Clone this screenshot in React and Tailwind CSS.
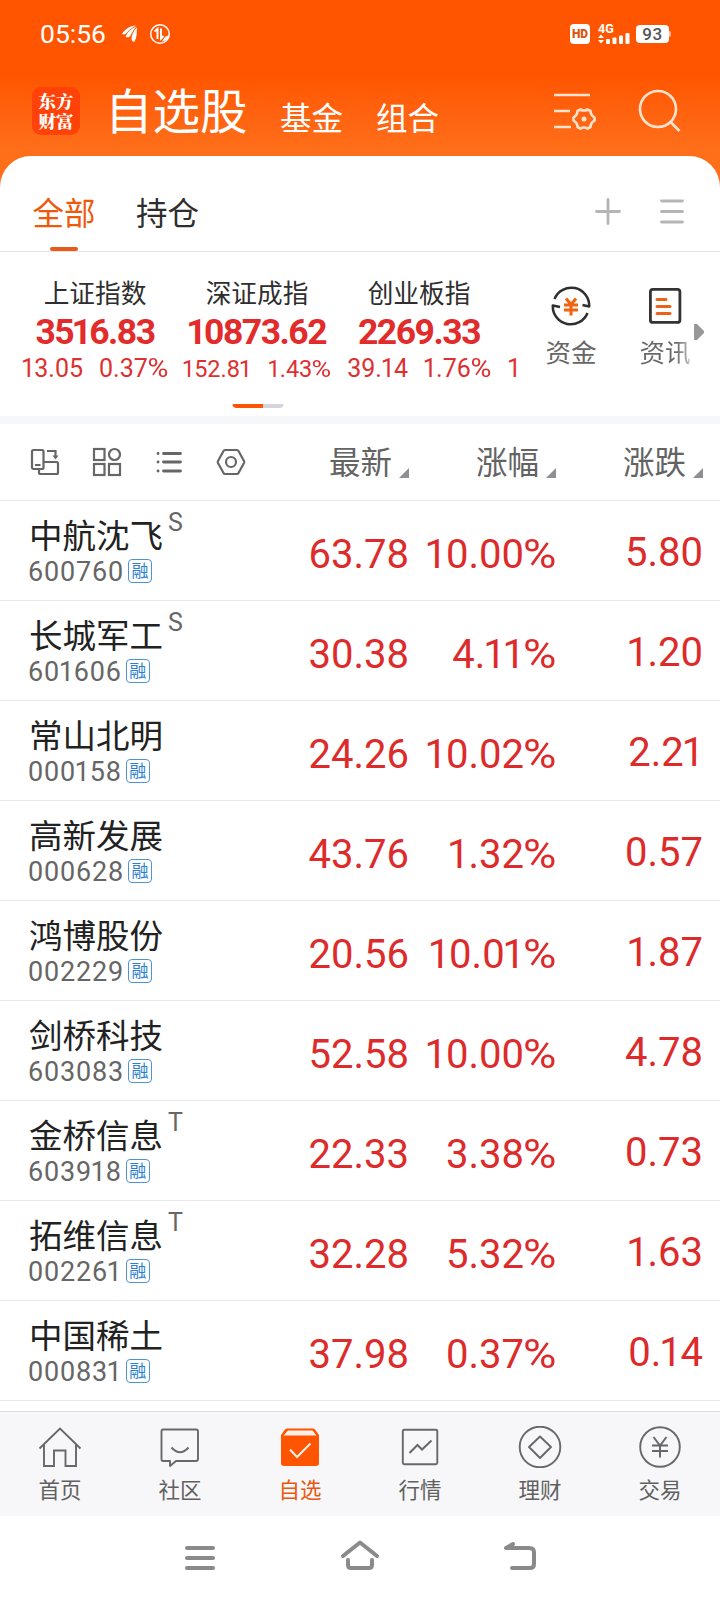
import clsx from 'clsx';

const indices = [
  { name: '上证指数', value: '3516.83', change: '13.05', percent: '0.37%' },
  { name: '深证成指', value: '10873.62', change: '152.81', percent: '1.43%', compact: true },
  { name: '创业板指', value: '2269.33', change: '39.14', percent: '1.76%' },
];

const stocks = [
  { name: '中航沈飞', code: '600760', flag: 'S', price: '63.78', percent: '10.00%', change: '5.80' },
  { name: '长城军工', code: '601606', flag: 'S', price: '30.38', percent: '4.11%', change: '1.20' },
  { name: '常山北明', code: '000158', price: '24.26', percent: '10.02%', change: '2.21' },
  { name: '高新发展', code: '000628', price: '43.76', percent: '1.32%', change: '0.57' },
  { name: '鸿博股份', code: '002229', price: '20.56', percent: '10.01%', change: '1.87' },
  { name: '剑桥科技', code: '603083', price: '52.58', percent: '10.00%', change: '4.78' },
  { name: '金桥信息', code: '603918', flag: 'T', price: '22.33', percent: '3.38%', change: '0.73' },
  { name: '拓维信息', code: '002261', flag: 'T', price: '32.28', percent: '5.32%', change: '1.63' },
  { name: '中国稀土', code: '000831', price: '37.98', percent: '0.37%', change: '0.14' },
];

const charSpacing = {
  1: '-mr-[0.03em] -ml-[0.05em]',
  '%': 'ml-[0.07em] inline-block origin-right scale-x-[1.14]',
};

// The figure 1 is set a little narrower than the other digits, the percent sign wider
function Num({ children, className }) {
  return (
    <span className={clsx('whitespace-nowrap', className)}>
      {children.split('').map((char, i) => (
        <span key={i} className={charSpacing[char]}>
          {char}
        </span>
      ))}
    </span>
  );
}

function StatusBar() {
  return (
    <div className="flex h-[68px] items-center pl-[40px] text-white">
      <span className="w-[66px] text-[26.500px] leading-none">05:56</span>
      <svg className="ml-[16px]" width="16" height="18" viewBox="0 0 16 18" fill="currentColor">
        <path d="M0 9C3 4 8 1 14 0.5C11 2 8 4 5.500 7C4 9 2 10 0 9Z" />
        <path d="M3.500 11.500C6 6.500 9.500 3 14.500 1.500C12 4 10 7.500 8.500 10.500C7.500 12.500 5 13 3.500 11.500Z" />
        <path d="M9.500 14.500C9.500 10 11.500 5.500 15 2.500C14.500 7 15.500 11 12.500 16.500C12 17 10 16.500 9.500 14.500Z" />
      </svg>
      <svg className="ml-[11px]" width="22" height="22" viewBox="0 0 22 22" fill="none" stroke="currentColor" strokeWidth="2">
        <circle cx="11" cy="11" r="9.300" strokeWidth="1.500" />
        <path d="M5.500 8.500L8.500 6V16M12 5.500V15.500L14.500 13" />
        <path d="M13 18.500C17 18 19 16 19.500 12.500C17 13 16 13.500 13 18.500Z" fill="currentColor" stroke="none" />
      </svg>
      <span className="ml-[399px] flex h-5 w-5 items-center justify-center rounded-[4px] bg-white text-[12px] leading-none font-black text-[#e2520c]">
        HD
      </span>
      <div className="ml-2 flex h-5 w-8 flex-col">
        <span className="h-[10px] text-[12.500px] leading-[10px] font-bold">4G</span>
        <svg className="-mt-px" width="32" height="11" viewBox="0 9 32 11" fill="currentColor">
          <path d="M0 14L3 10.500L6 14ZM0 16H6L3 19.500Z" />
          <rect x="8" y="15" width="4" height="5" rx="1" />
          <rect x="14.500" y="13.500" width="4" height="6.500" rx="1" />
          <rect x="21" y="11.500" width="4" height="8.500" rx="1" />
          <rect x="27.500" y="9" width="4" height="11" rx="1" />
        </svg>
      </div>
      <span className="ml-[6px] flex h-[18px] w-[33px] items-center justify-center rounded-[4px] bg-white text-[17px] leading-none font-medium tracking-[0.5px] text-[#555]">
        93
      </span>
      <span className="h-[6px] w-[2px] rounded-r-sm bg-white/60" />
    </div>
  );
}

function Header() {
  return (
    <div className="flex h-[88px] pl-[32px] text-white">
      <div className="mt-[19px] h-[48px] w-[48px] rounded-[9px] bg-[#ff4208] pt-[4px] text-center font-['Noto_Serif_CJK_SC','Noto_Sans_CJK_SC',sans-serif] text-[17.500px] leading-[19.500px] font-black">
        东方
        <br />
        财富
      </div>
      <div className="ml-[25px] w-[146px] pt-[10px] text-[47.500px] leading-[70px]">自选股</div>
      <div className="ml-[29px] w-[66px] pt-[28px] text-[31.500px] leading-[48px]">基金</div>
      <div className="ml-[30px] w-[66px] pt-[28px] text-[31.500px] leading-[48px]">组合</div>
      <svg className="mt-[24px] ml-[112px]" width="42" height="42" viewBox="0 0 42 42" fill="none" stroke="#ffe3cf" strokeWidth="2.600">
        <path d="M0 3H36M0 19H16M0 35H17" />
        <path
          d="M26.500 17.500Q30 19.500 33.500 17.500L36.500 19Q36.500 23 40.500 25.500V28.500Q36.500 31 36.500 35L33.500 36.500Q30 34.500 26.500 36.500L23.500 35Q23.500 31 19.500 28.500V25.500Q23.500 23 23.500 19Z"
          strokeLinejoin="round"
        />
        <circle cx="30" cy="27" r="2.500" fill="#ffe3cf" stroke="none" />
      </svg>
      <svg className="mt-[20px] ml-[42px]" width="44" height="44" viewBox="0 0 44 44" fill="none" stroke="#ffe3cf" strokeWidth="2.600">
        <circle cx="20" cy="21" r="18" />
        <path d="M32.500 34L41.500 43" />
      </svg>
    </div>
  );
}

function Tabs() {
  return (
    <div className="flex h-[96px] border-b border-[#e3e3e3] pl-[32px]">
      <div className="flex w-[64px] flex-col items-center">
        <div className="pt-[35px] text-[31.500px] leading-[48px] whitespace-nowrap text-[#ee5a0c]">全部</div>
        <div className="mt-auto h-[4px] w-[28px] rounded-full bg-[#e85a17]" />
      </div>
      <div className="ml-[40px] w-[64px] pt-[35px] text-[31.500px] leading-[48px] whitespace-nowrap text-[#2e2e2e]">持仓</div>
      <svg className="mt-[42px] ml-[395px]" width="26" height="27" viewBox="0 0 26 27" stroke="#b5b5b5" strokeWidth="2.800" strokeLinecap="round">
        <path d="M1.500 13.500H24.500M13 1.500V25.500" />
      </svg>
      <svg className="mt-[42px] ml-[39px]" width="24" height="27" viewBox="0 0 24 27" stroke="#b5b5b5" strokeWidth="2.800" strokeLinecap="round">
        <path d="M1.500 3H22.500M1.500 13.500H22.500M1.500 24H22.500" />
      </svg>
    </div>
  );
}

function IndexPanel() {
  return (
    <div className="h-[164px]">
      <div className="flex h-[147px]">
        <div className="flex w-[522px] shrink-0 overflow-hidden pl-[14px]">
          {indices.map((item) => (
            <div key={item.name} className="flex w-[162px] shrink-0 flex-col items-center pt-[23px]">
              <div className="text-[25.700px] leading-[38px] whitespace-nowrap text-[#2e2e2e]">{item.name}</div>
              <Num className="text-[35.500px] leading-[38px] font-bold tracking-[-1.500px] text-[#e22b2b]">{item.value}</Num>
              <div
                className={clsx(
                  'flex leading-[36px] text-[#dd3131]',
                  item.compact ? 'gap-[17px] text-[23.500px]' : 'gap-[16px] text-[25px]'
                )}
              >
                <Num>{item.change}</Num>
                <Num>{item.percent}</Num>
              </div>
            </div>
          ))}
          <div className="pt-[99px] pl-[7px] text-[25px] leading-[36px] text-[#dd3131]">1</div>
        </div>
        <div className="-ml-[3px] flex w-[104px] flex-col items-center pt-[34px]">
          <svg width="40" height="40" viewBox="0 0 40 40" fill="none" stroke="#2f2f2f" strokeWidth="2.500" strokeLinejoin="round">
            <path d="M3.500 13A18 18 0 0 1 38.200 20.500L31.500 19" />
            <path d="M36.500 27A18 18 0 0 1 1.800 19.500L9 21" />
            <path d="M15 12.500L20 18.500L25 12.500M13 19H27M13 24H27M20 18.500V29.500" stroke="#f0630f" strokeWidth="3" />
          </svg>
          <div className="mt-[8px] text-[25.500px] leading-[38px] whitespace-nowrap text-[#666]">资金</div>
        </div>
        <div className="flex w-[84px] flex-col items-center pt-[34px]">
          <svg width="40" height="40" viewBox="0 0 40 40" fill="none" stroke="#333" strokeWidth="2.800">
            <rect x="5.400" y="3.400" width="29.500" height="33" rx="2.500" />
            <path d="M12 13.500H21M12 20.500H25M12 27.500H25" stroke="#ee6116" strokeWidth="3" strokeLinecap="round" />
          </svg>
          <div className="mt-[8px] bg-gradient-to-r from-[#666] from-70% to-[#c4c4c4] bg-clip-text text-[25.500px] leading-[38px] whitespace-nowrap text-transparent">
            资讯
          </div>
        </div>
        <svg className="mt-[72px] -ml-[13px]" width="10" height="16" viewBox="0 0 10 16">
          <path d="M0 0H3L10 7V9L3 16H0Z" fill="#989898" />
        </svg>
      </div>
      <div className="ml-[232px] flex w-[52px] overflow-hidden rounded-full pt-[5px]">
        <div className="h-[4px] w-[31px] rounded-l-full bg-[#ff5500]" />
        <div className="h-[4px] w-[21px] rounded-r-full bg-[#d3d4dc]" />
      </div>
    </div>
  );
}

function ColumnTitle({ children }) {
  return (
    <div className="flex w-[147px] justify-end">
      <span className="pt-[17px] text-[31.500px] leading-[46px] whitespace-nowrap text-[#636363]">{children}</span>
      <svg className="mt-[44px] ml-[7px]" width="10" height="10" viewBox="0 0 10 10">
        <path d="M10 0V10H0Z" fill="#8f8f93" />
      </svg>
    </div>
  );
}

function TableHeader() {
  return (
    <div className="flex h-[77px] border-b border-[#e8e8e8] pl-[30px]">
      <div className="flex w-[232px] items-start gap-[32px] pt-[23px]">
        <svg width="30" height="30" viewBox="0 0 30 30" fill="none" stroke="#666" strokeWidth="2.200">
          <rect x="2" y="3" width="11.500" height="19" rx="1.500" />
          <path d="M5 18H10.500M9 22V25.500Q9 27 10.500 27H26.500Q28 27 28 25.500V16.500Q28 15 26.500 15H13.500" />
          <path d="M17 4H25.500V10" />
          <path d="M22.500 8.500H28.500L25.500 12.500Z" fill="#666" stroke="none" />
        </svg>
        <svg width="30" height="30" viewBox="0 0 30 30" fill="none" stroke="#666" strokeWidth="2.200">
          <rect x="2" y="2" width="10.500" height="11" />
          <circle cx="22.500" cy="7.500" r="5.500" />
          <rect x="2" y="17" width="10.500" height="11" />
          <rect x="17" y="17" width="11" height="11" />
        </svg>
        <svg width="30" height="30" viewBox="0 0 30 30" fill="none" stroke="#666" strokeWidth="2.800" strokeLinecap="round">
          <path d="M9.500 6.500H26.500M9.500 15H26.500M9.500 24H26.500M4 6.500H4.100M4 15H4.100M4 24H4.100" />
        </svg>
        <svg width="30" height="30" viewBox="0 0 30 30" fill="none" stroke="#666" strokeWidth="2.200" strokeLinejoin="round">
          <path d="M9 3H21Q22 3 22.500 4L28 14Q28.500 15 28 16L22.500 26Q22 27 21 27H9Q8 27 7.500 26L2 16Q1.500 15 2 14L7.500 4Q8 3 9 3Z" />
          <circle cx="15" cy="15" r="5" />
        </svg>
      </div>
      <ColumnTitle>最新</ColumnTitle>
      <ColumnTitle>涨幅</ColumnTitle>
      <ColumnTitle>涨跌</ColumnTitle>
    </div>
  );
}

function StockRow({ stock }) {
  return (
    <div className="flex h-[100px] border-b border-[#e8e8e8] pl-[28px]">
      <div className="w-[234px]">
        <div className="flex pt-[15px] pl-px">
          <span className="text-[33.500px] leading-[42px] whitespace-nowrap text-[#222]">{stock.name}</span>
          {stock.flag && <span className="-mt-[7px] ml-[5px] text-[25px] leading-[28px] text-[#666]">{stock.flag}</span>}
        </div>
        <div className="mt-px flex h-[24px] items-center">
          <Num className="pt-[2px] text-[27px] leading-[24px] tracking-[0.800px] text-[#666]">{stock.code}</Num>
          <span className="ml-[4px] flex h-[24px] w-[24px] items-center justify-center rounded-[4px] border border-[#4f93d1] text-[17px] leading-none text-[#2a80d0]">
            融
          </span>
        </div>
      </div>
      <Num className="w-[147px] pt-[25px] text-right text-[40px] leading-[58px] text-[#dd2b2b]">{stock.price}</Num>
      <Num className="w-[147px] pt-[25px] text-right text-[40px] leading-[58px] text-[#dd2b2b]">{stock.percent}</Num>
      <Num className="w-[147px] pt-[23px] text-right text-[40px] leading-[58px] text-[#dd2b2b]">{stock.change}</Num>
    </div>
  );
}

const HomeIcon = () => (
  <>
    <path d="M1.500 22.500L22 2.500L42.500 22.500" />
    <path d="M6 19V40H16V24.500H27.500V40H38V19" />
  </>
);

const CommunityIcon = () => (
  <>
    <path d="M5 3.500H38Q40 3.500 40 5.500V33Q40 35 38 35H18L12 40V35H5Q3.500 35 3.500 33V5.500Q3.500 3.500 5 3.500Z" strokeLinejoin="round" />
    <path d="M13.500 21.500Q22 31 30.500 21.500" />
  </>
);

const WatchlistIcon = () => (
  <>
    <path d="M9 2.500H35Q36 2.500 37 3.500L41 9V37Q41 40 38 40H6Q3 40 3 37V9L7 3.500Q8 2.500 9 2.500Z" fill="#ff5500" stroke="none" />
    <path d="M10 4.500H34.500L38.500 9.500H5.500Z" fill="#fff1e8" stroke="none" />
    <path d="M12 23.500L19 31L32.500 17.500" stroke="#fff1e8" strokeWidth="2" />
  </>
);

const MarketIcon = () => (
  <>
    <rect x="4.800" y="3.800" width="34.500" height="34.500" rx="1.500" />
    <path d="M11.500 27L19.500 19L24 23.500L33.500 14.500" strokeWidth="2" />
  </>
);

const WealthIcon = () => (
  <>
    <circle cx="22" cy="21" r="20.300" />
    <path d="M22 10.500L33 21L22 32L11 21Z" strokeLinejoin="round" />
  </>
);

const TradeIcon = () => (
  <>
    <circle cx="22" cy="21" r="19.800" />
    <path d="M15.500 11L22 19.500L28.500 11M14 19.500H30M14 25H30M22 19.500V31.500" strokeWidth="2" />
  </>
);

const navItems = [
  { label: '首页', icon: HomeIcon },
  { label: '社区', icon: CommunityIcon },
  { label: '自选', icon: WatchlistIcon, active: true },
  { label: '行情', icon: MarketIcon },
  { label: '理财', icon: WealthIcon },
  { label: '交易', icon: TradeIcon },
];

function BottomNav() {
  return (
    <div className="grid h-[105px] grid-cols-6 border-t border-[#dedede] bg-[#f7f7f9]">
      {navItems.map((item) => (
        <div key={item.label} className="flex flex-col items-center pt-[14px]">
          <svg width="44" height="42" viewBox="0 0 44 42" fill="none" stroke="#686868" strokeWidth="1.900">
            <item.icon />
          </svg>
          <span className={clsx('mt-[7px] text-[21.500px] leading-[32px]', item.active ? 'text-[#e8590f]' : 'text-[#606060]')}>
            {item.label}
          </span>
        </div>
      ))}
    </div>
  );
}

function SystemNav() {
  return (
    <div className="flex h-[84px] justify-center gap-[116px] pt-[22px]">
      <svg width="44" height="40" viewBox="0 0 44 40" fill="none" stroke="#8a8a8a" strokeWidth="4" strokeLinecap="round">
        <path d="M9 10H35M9 20H35M9 30H35" />
      </svg>
      <svg width="44" height="40" viewBox="0 0 44 40" fill="none" stroke="#8a8a8a" strokeWidth="4" strokeLinecap="round" strokeLinejoin="round">
        <path d="M5 18L22 4.500L39 18" />
        <path d="M10 22V27Q10 30 13 30H31Q34 30 34 27V22" />
      </svg>
      <svg width="44" height="40" viewBox="0 0 44 40" fill="none" stroke="#8a8a8a" strokeWidth="4" strokeLinecap="round" strokeLinejoin="round">
        <path d="M15 6L8 10H31Q36 10 36 14V26Q36 30 32 30H14" />
      </svg>
    </div>
  );
}

export default function App() {
  return (
    <div className="flex h-[1600px] w-[720px] flex-col overflow-hidden bg-white font-[Roboto,'Noto_Sans_CJK_SC',sans-serif]">
      <div className="h-[190px] shrink-0 bg-linear-to-b from-[#ff5500] from-40% to-[#ff6f1a] to-80%">
        <StatusBar />
        <Header />
      </div>
      <div className="-mt-[34px] shrink-0 rounded-t-[31px] bg-white">
        <Tabs />
        <IndexPanel />
        <div className="h-[8px] bg-[#f6f7f9]" />
        <TableHeader />
        {stocks.map((stock) => (
          <StockRow key={stock.code} stock={stock} />
        ))}
      </div>
      <div className="mt-auto shrink-0">
        <BottomNav />
        <SystemNav />
      </div>
    </div>
  );
}
